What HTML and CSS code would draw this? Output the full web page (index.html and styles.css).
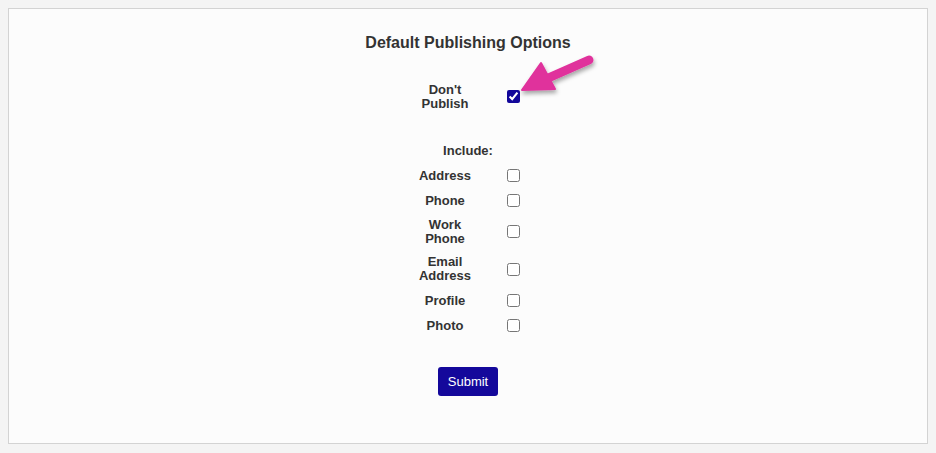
FILE: index.html
```html
<!DOCTYPE html>
<html>
<head>
<meta charset="utf-8">
<link rel="stylesheet" href="styles.css">
</head>
<body>
<div class="panel">
  <h2 class="title">Default Publishing Options</h2>
  <div class="grid">
    <label class="lbl" for="dp">Don't Publish</label>
    <div class="cb"><input type="checkbox" id="dp" checked></div>
    <div class="spacer"></div>
    <div class="include">Include:</div>
    <label class="lbl" for="a">Address</label>
    <div class="cb"><input type="checkbox" id="a"></div>
    <label class="lbl" for="p">Phone</label>
    <div class="cb"><input type="checkbox" id="p"></div>
    <label class="lbl" for="w">Work Phone</label>
    <div class="cb"><input type="checkbox" id="w"></div>
    <label class="lbl" for="e">Email Address</label>
    <div class="cb"><input type="checkbox" id="e"></div>
    <label class="lbl" for="pr">Profile</label>
    <div class="cb"><input type="checkbox" id="pr"></div>
    <label class="lbl" for="ph">Photo</label>
    <div class="cb"><input type="checkbox" id="ph"></div>
  </div>
  <button class="submit" type="button">Submit</button>
  <svg class="arrow" width="100" height="60" viewBox="500 45 100 60">
    <defs>
      <filter id="sh" x="-30%" y="-30%" width="160%" height="160%">
        <feDropShadow dx="1" dy="3" stdDeviation="2" flood-color="#000" flood-opacity="0.35"/>
      </filter>
    </defs>
    <g filter="url(#sh)" fill="#e0329c" stroke="#e0329c">
      <line x1="589" y1="60" x2="546" y2="79" stroke-width="9" stroke-linecap="round"/>
      <polygon points="522,90 541,63 555,89" stroke-width="2" stroke-linejoin="round"/>
    </g>
  </svg>
</div>
</body>
</html>
```
FILE: styles.css
```css
html, body {
  background: #f4f4f4;
}
body {
  margin: 8px;
  font-family: "Liberation Sans", Arial, sans-serif;
  color: #333;
}
.panel {
  position: relative;
  box-sizing: border-box;
  height: 436px;
  background: #fcfcfc;
  border: 1px solid #d3d3d3;
  display: flex;
  flex-direction: column;
  align-items: center;
  padding-top: 25px;
}
.title {
  margin: 0;
  font-size: 16px;
  line-height: 18px;
  font-weight: bold;
  color: #333;
}
.grid {
  margin-top: 26px;
  display: grid;
  grid-template-columns: 91px 46px;
  grid-template-rows: 37px 23px 25px 25px 25px 37px 38px 25px 25px;
  align-items: center;
  justify-items: center;
}
.lbl {
  box-sizing: border-box;
  width: 91px;
  padding: 0 16px;
  text-align: center;
  font-size: 13px;
  line-height: 14px;
  font-weight: bold;
  color: #333;
}
.cb {
  display: flex;
  align-items: center;
  justify-content: center;
}
.cb input {
  margin: 0;
  width: 13px;
  height: 13px;
  accent-color: #12079a;
}
.spacer {
  grid-column: 1 / span 2;
}
.include {
  grid-column: 1 / span 2;
  font-size: 13px;
  line-height: 14px;
  font-weight: bold;
  color: #333;
}
.submit {
  margin-top: 29px;
  width: 60px;
  height: 29px;
  padding: 0;
  border: none;
  border-radius: 3px;
  background: #14089b;
  color: #fff;
  font-family: "Liberation Sans", Arial, sans-serif;
  font-size: 13px;
}
.arrow {
  position: absolute;
  left: 491px;
  top: 36px;
  overflow: visible;
}
```
